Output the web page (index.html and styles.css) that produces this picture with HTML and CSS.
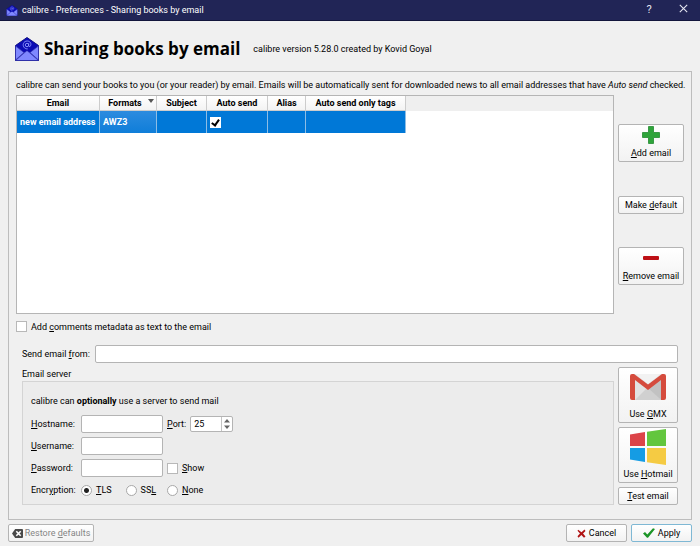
FILE: index.html
```html
<!DOCTYPE html>
<html lang="en">
<head>
<meta charset="utf-8">
<title>calibre - Preferences - Sharing books by email</title>
<link rel="stylesheet" href="styles.css">
</head>
<body>
<svg class="defs" aria-hidden="true">
  <symbol id="envelope" viewBox="0 0 24 24">
    <path d="M0.5 8.5 12 .5l11.500 8V23.500H.5z" fill="#0c0cb4" stroke="#15157c"/>
    <path d="M1 9 9 15.500h6L23 9v14H1z" fill="#7f88ff"/>
    <path d="M.5 9 9 15.500.5 23zM23.500 9 15 15.500l8.500 7.500z" fill="#7f88ff" stroke="#2525a0" stroke-width=".7"/>
    <path d="M.5 23.500 12 13.500l11.500 10z" fill="#7f88ff" stroke="#2525a0" stroke-width=".7"/>
    <path d="M1 8.500 12 1l11 7.500-8 6.500-3-1.800L9 15z" fill="#0c0cb4"/>
    <g fill="none" stroke="#8f98ff" stroke-width=".9"><circle cx="12" cy="8" r="1.700"/><path d="M13.700 6.300v2.500q.3 1.200 1.500.5c1.800-2.700-.2-5.300-3-5.300-5.300 0-5.500 8 .5 7.900"/></g>
  </symbol>
</svg>
<header class="titlebar">
  <svg class="titlebar-icon" aria-hidden="true"><use href="#envelope"/></svg>
  <span class="titlebar-text">calibre - Preferences - Sharing books by email</span>
  <button class="titlebar-button" type="button" aria-label="Help">?</button>
  <button class="titlebar-button" type="button" aria-label="Close"><svg width="9" height="9" viewBox="0 0 9 9"><path d="M.8.8l7.400 7.400M8.200.8.8 8.200" stroke="#e4e5f0" stroke-width="1.100"/></svg></button>
</header>
<div class="heading">
  <svg class="heading-icon" aria-hidden="true"><use href="#envelope"/></svg>
  <h1>Sharing books by email</h1>
  <span>calibre version 5.28.0 created by Kovid Goyal</span>
</div>
<main class="panel">
  <p class="intro">calibre can send your books to you (or your reader) by email. Emails will be automatically sent for downloaded news to all email addresses that have <i>Auto send</i> checked.</p>
  <section class="addresses">
    <div class="table-frame">
      <table>
        <colgroup><col class="c-email"><col class="c-formats"><col class="c-subject"><col class="c-auto"><col class="c-alias"><col class="c-tags"><col></colgroup>
        <thead><tr><th>Email</th><th class="sorted">Formats<svg class="sort" width="6" height="4" viewBox="0 0 6 4"><path d="M0 0h6L3 4z" fill="#555"/></svg></th><th>Subject</th><th>Auto send</th><th>Alias</th><th>Auto send only tags</th><td></td></tr></thead>
        <tbody><tr><td>new email address</td><td class="current">AWZ3</td><td></td><td><input class="check" type="checkbox" aria-label="Auto send" checked></td><td></td><td></td><td></td></tr></tbody>
      </table>
    </div>
    <div class="side-buttons">
      <button class="button tall" type="button"><svg width="18" height="18" viewBox="0 0 18 18"><path d="M6.500.5h5v6h6v5h-6v6h-5v-6h-6v-5h6z" fill="#2fa53b" stroke="#238a31" stroke-width=".8" stroke-linejoin="round"/></svg><span><u>A</u>dd email</span></button>
      <button class="button" type="button"><span>Make <u>d</u>efault</span></button>
      <button class="button tall" type="button"><svg width="18" height="18" viewBox="0 0 18 18"><rect x="1" y="7" width="16" height="4" rx="1" fill="#bd1016"/></svg><span><u>R</u>emove email</span></button>
    </div>
  </section>
  <label class="comments"><input class="check" type="checkbox"><span>Add <u>c</u>omments metadata as text to the email</span></label>
  <section class="sending">
    <div class="from"><label for="from">Send email <u>f</u>rom:</label><input class="field" id="from" type="text"></div>
    <div class="server">
      <fieldset>
        <legend>Email server</legend>
        <div class="group">
          <p>calibre can <b>optionally</b> use a server to send mail</p>
          <div class="form">
            <label for="host"><u>H</u>ostname:</label>
            <input class="field" id="host" type="text">
            <div class="extra"><label for="port"><u>P</u>ort:</label><span class="spin"><input id="port" type="number" value="25"><svg width="10" height="14" viewBox="0 0 10 14" aria-hidden="true"><path d="M5 2 8 5.500H2zM5 12 2 8.500h6z" fill="#666"/></svg></span></div>
            <label for="user"><u>U</u>sername:</label>
            <input class="field" id="user" type="text">
            <span></span>
            <label for="pass"><u>P</u>assword:</label>
            <input class="field" id="pass" type="password">
            <label class="extra"><input class="check" type="checkbox"><span><u>S</u>how</span></label>
            <span>Encr<u>y</u>ption:</span>
            <div class="radios">
              <label><input type="radio" name="enc" checked><span><u>T</u>LS</span></label>
              <label><input type="radio" name="enc"><span>SS<u>L</u></span></label>
            </div>
            <label class="extra"><input type="radio" name="enc"><span><u>N</u>one</span></label>
          </div>
        </div>
      </fieldset>
      <div class="presets">
        <button class="button provider" type="button"><svg width="36" height="36" viewBox="0 0 36 36"><path d="M2 5h32v26H2z" fill="#e2e2e2"/><path d="M5 31 18 18l13 13z" fill="#d0d0d0"/><path d="m18 19 13-12v24z" fill="#c2c2c2"/><path d="M5 5h26L18 15z" fill="#f2f2f2"/><path d="M0 7q0-2 2-2h2l14 10.500L32 5h2q2 0 2 2v22q0 2-2 2h-3V11L18 21 5 11v20H2q-2 0-2-2z" fill="#d54b3d"/></svg><span>Use <u>G</u>MX</span></button>
        <button class="button provider" type="button"><svg width="36" height="36" viewBox="0 0 36 36"><path d="M0 5.500 15 3v14H0z" fill="#dc4449"/><path d="M17 2.800 36 0v17H17z" fill="#63c63e"/><path d="M0 19h15v14L0 30.500z" fill="#159ce4"/><path d="M17 19h19v17l-19-2.800z" fill="#f5cb43"/></svg><span>Use <u>H</u>otmail</span></button>
        <button class="button" type="button"><span><u>T</u>est email</span></button>
      </div>
    </div>
  </section>
</main>
<footer>
  <button class="button restore" type="button" disabled><svg width="11" height="9" viewBox="0 0 11 9"><path d="M3.200 0H10q1 0 1 1v7q0 1-1 1H3.200L0 4.500z" fill="#4a4a4a"/><path d="m4.300 2.300 4.400 4.400m0-4.400L4.300 6.700" stroke="#fff" stroke-width="1.600"/></svg><span>Restore <u>d</u>efaults</span></button>
  <button class="button action" type="button"><svg width="9" height="9" viewBox="0 0 9 9"><path d="M1.200.8 4.500 3.200 7.500.5 8.500 2 6 4.500 8.500 7.500 7 8.700 4.400 6 1.500 8.700.5 7.200 3 4.500.5 1.800z" fill="#b01313"/></svg><span>Cancel</span></button>
  <button class="button action primary" type="button"><svg width="12" height="10" viewBox="0 0 12 10"><path d="M0 5.500 2 4l2.300 2.500L10 .3 12 1 5 9.700H4z" fill="#1c9427"/></svg><span>Apply</span></button>
</footer>
</body>
</html>
```

FILE: styles.css
```css
*, ::before, ::after { box-sizing: border-box; }

body {
  margin: 0;
  min-height: 100vh;
  display: flex;
  flex-direction: column;
  background: #f0f0f0;
  color: #000;
  font: 9px/14px Roboto, "Noto Sans", sans-serif;
}

button, input { font: inherit; color: inherit; margin: 0; }
p, h1 { margin: 0; }
svg { flex: none; }
u { text-underline-offset: 1px; }
.defs { display: none; }

.titlebar {
  display: flex;
  align-items: center;
  height: 21px;
  padding-left: 6px;
  background: #212556;
  border-bottom: 1px solid #12153c;
  color: #fff;
}
.titlebar-icon { width: 12px; height: 11px; margin-right: 4px; }
.titlebar-text { flex: 1; }
.titlebar-button {
  width: 34px;
  padding: 0;
  border: 0;
  background: none;
  color: #e4e5f0;
  font-size: 11px;
}

.heading {
  display: flex;
  align-items: center;
  gap: 5px;
  height: 50px;
  padding: 5px 15px 0;
}
.heading-icon { width: 24px; height: 24px; }
.heading h1 {
  margin-right: 8px;
  font: bold 17px/24px "Open Sans", "Noto Sans", sans-serif;
}

.panel {
  flex: 1;
  padding: 6px 7px;
  border: 1px solid #bdbdbd;
  margin: 0 8px;
}
.intro { height: 17px; white-space: nowrap; }

.addresses { display: flex; gap: 4px; }
.table-frame {
  flex: 1;
  height: 219px;
  border: 1px solid #b5b5b5;
  background: #fff;
}
table { width: 100%; table-layout: fixed; border-collapse: separate; border-spacing: 0; }
.c-email { width: 83px; }
.c-formats { width: 57px; }
.c-subject { width: 50px; }
.c-auto { width: 61px; }
.c-alias { width: 38px; }
.c-tags { width: 100px; }
th, td { padding: 0; white-space: nowrap; }
thead { background: #efefef; }
th {
  height: 15px;
  line-height: 14px;
  background: linear-gradient(#fff, #f3f3f3);
  border-right: 1px solid #ccc;
  border-bottom: 1px solid #ccc;
}
.sorted { padding: 0 6px; }
.sort { margin: 0 -6px 3px 6px; }
tbody td {
  height: 22px;
  padding-left: 3px;
  background: #0078d7;
  border-right: 1px solid #8dbde5;
  color: #fff;
  font-weight: bold;
}
tbody td:last-child { background: #fff; border: 0; }
tbody .current { background: linear-gradient(#2c8bdf, #0f7ed9); }
tbody .check { border-color: #fff; }

.check {
  appearance: none;
  display: grid;
  justify-content: center;
  align-content: start;
  width: 11px;
  height: 11px;
  border: 1px solid #b8b8b8;
  background: #fff;
}
.check:checked::after {
  content: "";
  width: 5px;
  height: 8px;
  border: solid #000;
  border-width: 0 2px 2px 0;
  transform: rotate(35deg);
}

.side-buttons {
  width: 66px;
  display: flex;
  flex-direction: column;
  justify-content: space-evenly;
  gap: 5px;
}
.button {
  display: flex;
  align-items: center;
  justify-content: center;
  height: 18px;
  padding: 0;
  border: 1px solid #b4b4b4;
  border-radius: 2px;
  background: linear-gradient(#fff, #f2f2f2);
  white-space: nowrap;
}
.tall, .provider { flex-direction: column; gap: 2px; }
.tall { height: 38px; }
.provider { height: 56px; }

.comments { display: flex; align-items: center; gap: 4px; height: 25px; }

.sending { padding: 6px 6px 0; }
.from { display: flex; align-items: center; }
.from label { width: 73px; }
.field {
  height: 18px;
  min-width: 0;
  padding: 0 3px;
  border: 1px solid #b4b4b4;
  border-radius: 2px;
  background: #fff;
}
.from .field { flex: 1; }
.server { display: flex; gap: 4px; padding-top: 4px; }
fieldset { flex: 1; min-width: 0; padding: 0; margin: 0; border: 0; }
legend { padding: 0; height: 14px; }
.group {
  height: 124px;
  padding: 12px 8px;
  border: 1px solid #d4d4d4;
  background: #ececec;
}
.form {
  display: grid;
  grid-template-columns: 46px 82px 1fr;
  grid-auto-rows: 18px;
  align-items: center;
  gap: 4px;
  margin-top: 7px;
}
.extra, .radios label { display: flex; align-items: center; gap: 4px; }
.spin {
  display: flex;
  width: 43px;
  height: 16px;
  border: 1px solid #b4b4b4;
  border-radius: 2px;
  background: #fff;
}
.spin input {
  flex: 1;
  min-width: 0;
  padding: 0 3px;
  border: 0;
  border-right: 1px solid #c4c4c4;
  background: none;
  appearance: textfield;
}
.spin input::-webkit-inner-spin-button { appearance: none; margin: 0; }
.radios { display: flex; gap: 14px; }
input[type="radio"] {
  appearance: none;
  width: 11px;
  height: 11px;
  border: 1px solid #a8a8a8;
  border-radius: 50%;
  background: #fff;
}
input[type="radio"]:checked { background: radial-gradient(circle, #222 2px, #fff 3px); }

.presets { width: 60px; display: flex; flex-direction: column; gap: 4px; }

footer { display: flex; gap: 4px; padding: 4px 8px; }
.restore { width: 86px; gap: 2px; margin-right: auto; color: #858585; }
.action { width: 61px; gap: 3px; }
.primary { border-color: #7fb8d4; }
```
